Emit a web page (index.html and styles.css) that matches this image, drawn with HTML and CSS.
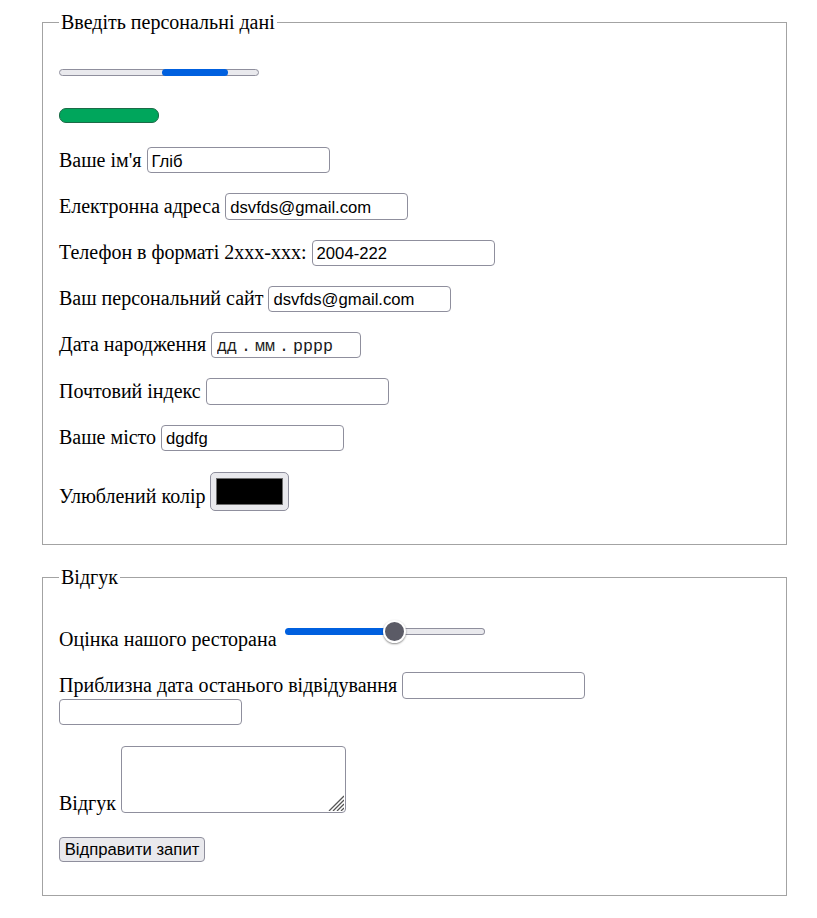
FILE: index.html
```html
<!DOCTYPE html>
<html lang="uk">
<head>
<meta charset="utf-8">
<title>Форма</title>
<link rel="stylesheet" href="styles.css">
</head>
<body>
<div class="page">
  <form class="form">
    <fieldset class="group">
      <legend class="legend">Введіть персональні дані</legend>
      <p class="bar-row">
        <span class="progress" role="progressbar" aria-label="Прогрес">
          <span class="progress-track"></span>
          <span class="progress-seg"></span>
        </span>
      </p>
      <p class="bar-row">
        <span class="meter" role="meter" aria-valuenow="100" aria-valuemin="0" aria-valuemax="100"></span>
      </p>
      <p class="row"><label>Ваше ім'я <input class="field" type="text" value="Гліб"></label></p>
      <p class="row"><label>Електронна адреса <input class="field" type="email" value="dsvfds@gmail.com"></label></p>
      <p class="row"><label>Телефон в форматі 2xxx-xxx: <input class="field" type="tel" value="2004-222"></label></p>
      <p class="row"><label>Ваш персональний сайт <input class="field" type="text" value="dsvfds@gmail.com"></label></p>
      <p class="row"><label>Дата народження <input class="field field-date" type="text" value="дд . мм . рррр" readonly></label></p>
      <p class="row"><label>Почтовий індекс <input class="field" type="text"></label></p>
      <p class="row"><label>Ваше місто <input class="field" type="text" value="dgdfg"></label></p>
      <p class="row-flex color-row">
        <label class="color-label" for="fav-color">Улюблений колір</label>
        <input class="color" id="fav-color" type="color" value="#000000">
      </p>
    </fieldset>

    <fieldset class="group group-second">
      <legend class="legend">Відгук</legend>
      <p class="row-flex rating-row">
        <span class="rating-label">Оцінка нашого ресторана</span>
        <span class="slider" role="slider" aria-valuemin="1" aria-valuemax="10" aria-valuenow="6">
          <span class="slider-fill"></span>
          <span class="slider-rest"></span>
          <span class="slider-thumb"></span>
        </span>
      </p>
      <p class="row"><label>Приблизна дата останього відвідування <input class="field" type="text"></label> <input class="field" type="text"></p>
      <p class="row-flex area-row">
        <span class="area-label">Відгук</span>
        <span class="area-wrap">
          <textarea class="area"></textarea>
          <svg class="grip" width="16" height="16" viewBox="0 0 16 16" aria-hidden="true">
            <path d="M1 16 L16 1 M5 16 L16 5 M9 16 L16 9 M13 16 L16 13" stroke="#555" stroke-width="1.3" fill="none"/>
          </svg>
        </span>
      </p>
      <p class="row-flex button-row"><button class="btn" type="submit">Відправити запит</button></p>
    </fieldset>
  </form>
</div>
</body>
</html>
```

FILE: styles.css
```css
body {
  margin: 0;
  background: #fff;
  color: #000;
  font-family: "Liberation Serif", "Times New Roman", serif;
  font-size: 20px;
  line-height: 23px;
}

.page {
  padding: 11px 0 0 42px;
}

.form {
  margin: 0;
}

.group {
  box-sizing: border-box;
  width: 745px;
  min-inline-size: 0;
  margin: 0;
  padding: 7px 16px 13.5px;
  border: 1px solid #a3a3a3;
}

.group-second {
  margin-top: 21px;
  padding-bottom: 12.5px;
}

.legend {
  padding: 0 2px;
  line-height: 23px;
}

.row {
  margin: 20px 0;
}

.bar-row {
  margin: 20px 0;
  height: 23px;
  display: flex;
  align-items: center;
}

/* progress (indeterminate) */
.progress {
  display: grid;
  width: 200px;
  height: 7px;
}

.progress-track,
.progress-seg {
  grid-area: 1 / 1;
  height: 7px;
  box-sizing: border-box;
  border-radius: 4px;
}

.progress-track {
  border: 1px solid #8f8f9d;
  background: #e9e9ed;
}

.progress-seg {
  width: 66px;
  margin-left: 103px;
  background: #0060df;
}

/* meter */
.meter {
  display: block;
  box-sizing: border-box;
  width: 100px;
  height: 15px;
  border: 1px solid #1c6b47;
  border-radius: 7px;
  background: #00a65c;
}

/* text inputs */
.field {
  box-sizing: border-box;
  width: 183px;
  height: 26.25px;
  margin: 0;
  padding: 3px 4px 0;
  border: 1px solid #8f8f9d;
  border-radius: 4px;
  background: #fff;
  color: #000;
  font-family: "Liberation Sans", Arial, sans-serif;
  font-size: 16.67px;
  vertical-align: baseline;
  outline: none;
}

.field-date {
  width: 150px;
  padding-left: 5px;
  font-family: "Liberation Mono", "Courier New", monospace;
  word-spacing: -6px;
  color: #1a1a1a;
}

/* flex rows */
.row-flex {
  margin: 20px 0;
  display: flex;
  align-items: flex-end;
}

/* colour picker */
.color-row {
  gap: 5px;
}

.color-label {
  margin-bottom: 2.3px;
}

.color {
  -webkit-appearance: none;
  appearance: none;
  box-sizing: border-box;
  width: 79px;
  height: 39px;
  margin: 1px 0 0;
  padding: 0;
  border: 1px solid #8f8f9d;
  border-radius: 5px;
  background: #e9e9ed;
  cursor: pointer;
}

.color::-webkit-color-swatch-wrapper {
  padding: 5px;
}

.color::-webkit-color-swatch {
  border: 1px solid #6f6f6f;
  border-radius: 0;
}

/* rating slider */
.rating-row {
  height: 36px;
}

.rating-label {
  margin-bottom: 1px;
}

.slider {
  display: grid;
  grid-template-columns: 110px 90px;
  align-items: center;
  width: 200px;
  height: 23px;
  margin: 0 0 9px 8px;
}

.slider-fill {
  grid-area: 1 / 1;
  height: 7px;
  background: #0060df;
  border-radius: 4px 0 0 4px;
}

.slider-rest {
  grid-area: 1 / 2;
  box-sizing: border-box;
  height: 7px;
  border: 1px solid #8f8f9d;
  border-left: none;
  background: #e9e9ed;
  border-radius: 0 4px 4px 0;
}

.slider-thumb {
  grid-area: 1 / 1 / 2 / 3;
  justify-self: start;
  box-sizing: border-box;
  width: 23px;
  height: 23px;
  margin-left: 98px;
  border: 2px solid #fff;
  border-radius: 50%;
  background: #5b5b66;
  box-shadow: 0 1px 2px rgba(0, 0, 0, 0.45);
}

/* textarea */
.area-row {
  gap: 5px;
}

.area-wrap {
  position: relative;
  display: block;
  margin: 1px 0 0;
}

.area {
  display: block;
  box-sizing: border-box;
  width: 225px;
  height: 67px;
  margin: 0 0 2px;
  padding: 2px;
  border: 1px solid #8f8f9d;
  border-radius: 4px;
  resize: none;
  font-family: "Liberation Mono", monospace;
  font-size: 16.67px;
  outline: none;
}

.grip {
  position: absolute;
  right: 2px;
  bottom: 4px;
}

/* button */
.button-row {
  align-items: flex-start;
}

.btn {
  box-sizing: border-box;
  width: 146px;
  height: 25px;
  margin: 2px 0 1px;
  padding: 0;
  border: 1px solid #8f8f9d;
  border-radius: 4px;
  background: #e9e9ed;
  color: #000;
  font-family: "Liberation Sans", Arial, sans-serif;
  font-size: 16.67px;
  line-height: 23px;
}
```
